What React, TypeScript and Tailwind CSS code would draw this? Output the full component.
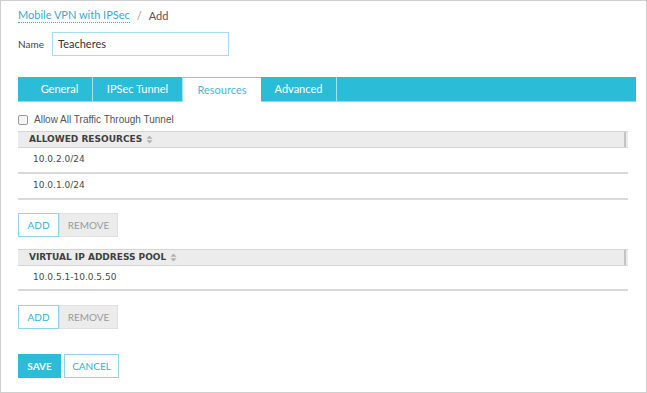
import React from "react";

const lato = { fontFamily: "Lato, 'Open Sans', sans-serif" };

function SortIcon() {
  return (
    <svg width="7" height="9" viewBox="0 0 7 9" className="ml-[4px] inline-block">
      <path d="M3.5 0.5 L6.5 3.7 L0.5 3.7 Z" fill="#b0b0b0" />
      <path d="M3.5 8.5 L6.5 5.3 L0.5 5.3 Z" fill="#b0b0b0" />
    </svg>
  );
}

function TableHeader({ label }: { label: string }) {
  return (
    <div className="flex h-[17px] w-[610px] items-center border-t border-b border-[#d6d6d6] bg-[#ececec]">
      <div className="flex h-full flex-1 items-center border-r-2 border-[#c4c4c4] pl-[11px]">
        <span
          className="text-[9px] font-bold text-[#3f3f3f]"
          style={{ fontFamily: "'DejaVu Sans', Verdana, sans-serif" }}
        >
          {label}
        </span>
        <SortIcon />
      </div>
      <div className="w-[2px]" />
    </div>
  );
}

function Row({ text, h }: { text: string; h: string }) {
  return (
    <div className={`flex w-[610px] items-center border-b-2 border-[#d9d9d9] pl-[15px] ${h}`}>
      <span
        className="text-[9px] text-[#4a4a4a]"
        style={{ fontFamily: "'DejaVu Sans', Verdana, sans-serif" }}
      >
        {text}
      </span>
    </div>
  );
}

function AddRemove() {
  return (
    <div className="flex h-[24px]" style={lato}>
      <button className="flex h-full w-[41px] items-center justify-center border border-[#8fd6e6] bg-white text-[10px] text-[#29b6d3]">
        ADD
      </button>
      <button className="flex h-full w-[59px] items-center justify-center border border-[#e0e0e0] bg-[#ececec] text-[10px] text-[#9a9a9a]">
        REMOVE
      </button>
    </div>
  );
}

export default function App() {
  const tabs = [
    { label: "General", w: "w-[75px] pl-[9px]", active: false },
    { label: "IPSec Tunnel", w: "w-[90px]", active: false },
    { label: "Resources", w: "w-[78px]", active: true },
    { label: "Advanced", w: "w-[76px]", active: false },
  ];
  return (
    <div className="h-[393px] w-[647px] overflow-hidden border border-[#cfcfcf] bg-white">
      <div className="flex flex-col pl-[17px]">
        {/* breadcrumb */}
        <div className="flex items-center pt-[7px] text-[11px] leading-[14px]" style={lato}>
          <span className="border-b border-dotted border-[#29b6d3] text-[#35acd2]">
            Mobile VPN with IPSec
          </span>
          <span className="ml-[7px] text-[#999]">/</span>
          <span className="ml-[7px] text-[#555]">Add</span>
        </div>

        {/* name */}
        <div className="mt-[9px] flex items-center" style={lato}>
          <span className="w-[34px] text-[10px] text-[#444]">Name</span>
          <div className="flex h-[24px] w-[177px] items-center border border-[#a6dceb] pl-[5px] text-[11px] text-[#333]">
            Teacheres
          </div>
        </div>

        {/* tabs */}
        <div
          className="mt-[21px] flex h-[25px] w-[618px] border-b border-[#8fd8e8] bg-[#2bbdd7]"
          style={lato}
        >
          {tabs.map((t) =>
            t.active ? (
              <div
                key={t.label}
                className={`flex h-[25px] items-center justify-center border-t border-[#6ccfe2] bg-white text-[11px] text-[#4db7cf] ${t.w}`}
              >
                {t.label}
              </div>
            ) : (
              <div
                key={t.label}
                className={`flex h-full items-center justify-center border-r border-[#a6e2ee] text-[11px] text-white ${t.w}`}
              >
                {t.label}
              </div>
            )
          )}
        </div>

        {/* checkbox */}
        <div className="mt-[12px] flex h-[12px] items-center">
          <div className="h-[10px] w-[10px] rounded-[2px] border border-[#9a9a9a] bg-[#f5f5f5]" />
          <span
            className="ml-[6px] text-[10px] leading-[12px] text-[#555]"
            style={{ fontFamily: "'Liberation Sans', Arial, sans-serif" }}
          >
            Allow All Traffic Through Tunnel
          </span>
        </div>

        {/* allowed resources */}
        <div className="mt-[5px]">
          <TableHeader label="ALLOWED RESOURCES" />
          <Row text="10.0.2.0/24" h="h-[26px]" />
          <Row text="10.0.1.0/24" h="h-[26px]" />
        </div>
        <div className="mt-[13px]">
          <AddRemove />
        </div>

        {/* virtual ip pool */}
        <div className="mt-[12px]">
          <TableHeader label="VIRTUAL IP ADDRESS POOL" />
          <Row text="10.0.5.1-10.0.5.50" h="h-[25px]" />
        </div>
        <div className="mt-[14px]">
          <AddRemove />
        </div>

        {/* save cancel */}
        <div className="mt-[25px] flex h-[24px]" style={lato}>
          <button className="flex h-full w-[43px] items-center justify-center bg-[#2bbdd7] text-[10px] font-bold text-white">
            SAVE
          </button>
          <button className="ml-[3px] flex h-full w-[55px] items-center justify-center border border-[#8fd6e6] bg-white text-[10px] text-[#29b6d3]">
            CANCEL
          </button>
        </div>
      </div>
    </div>
  );
}
